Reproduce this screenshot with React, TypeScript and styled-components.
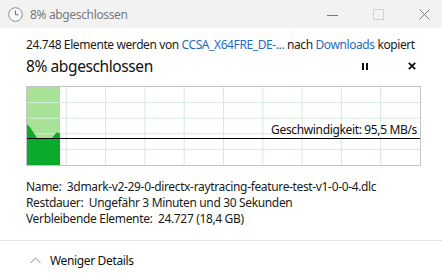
import React from 'react';
import styled, { createGlobalStyle } from 'styled-components';

const GlobalStyle = createGlobalStyle`
  html, body {
    margin: 0;
    padding: 0;
    background: #ffffff;
  }
  body {
    font-family: "Noto Sans", "Open Sans", sans-serif;
    font-size: 12px;
    letter-spacing: -0.35px;
    color: #1b1b1b;
  }
`;

const Window = styled.div`
  width: 442px;
  height: 279px;
  display: flex;
  flex-direction: column;
  background: #fff;
  overflow: hidden;
`;

const TitleBar = styled.div`
  height: 28px;
  flex-shrink: 0;
  background: #f2f2f2;
  display: flex;
  align-items: center;
  padding-left: 8px;
  box-sizing: border-box;
`;

const TitleText = styled.span`
  margin-left: 7px;
  color: #7a7a7a;
  font-size: 12px;
  flex: 1;
`;

const Captions = styled.div`
  display: flex;
  flex-shrink: 0;
  margin-right: -5px;
`;

const CaptionButton = styled.div`
  width: 46px;
  height: 28px;
  display: flex;
  align-items: center;
  justify-content: center;
`;

const Body = styled.div`
  padding: 9px 22px 0 26px;
  display: flex;
  flex-direction: column;
`;

const InfoLine = styled.div`
  line-height: 16px;
  white-space: nowrap;
  letter-spacing: -0.4px;
`;

const Link = styled.span`
  color: #1f6bc1;
`;

const HeadRow = styled.div`
  display: flex;
  align-items: center;
  height: 22px;
  margin-top: 2px;
`;

const Heading = styled.div`
  font-size: 15.5px;
  letter-spacing: -0.4px;
  flex: 1;
  color: #111;
`;

const IconButton = styled.div<{ $w: number; $gap?: number }>`
  width: ${p => p.$w}px;
  margin-right: ${p => p.$gap || 0}px;
  height: 14px;
  display: flex;
  align-items: center;
  justify-content: center;
`;

const Graph = styled.div`
  position: relative;
  margin-top: 9px;
  width: 393px;
  height: 78px;
  border: 1px solid #c4c4c4;
  svg { display: block; }
`;

const Speed = styled.div`
  position: absolute;
  right: 3px;
  top: 36px;
  font-size: 12px;
  line-height: 14px;
  color: #111;
`;

const Details = styled.div`
  margin-top: 13px;
  display: flex;
  flex-direction: column;
`;

const DetailLine = styled.div`
  line-height: 16px;
  white-space: pre;
`;

const Footer = styled.div`
  margin-top: auto;
  border-top: 1px solid #e4e4e4;
  height: 39px;
  display: flex;
  align-items: center;
  padding-left: 30px;
  box-sizing: border-box;
`;

const FooterLabel = styled.span`
  margin-left: 9px;
  font-size: 12px;
  color: #111;
`;

const W = 393;
const H = 78;

const GraphSvg = () => {
  const cols = Array.from({ length: 9 }, (_, i) => ((i + 1) * W) / 10);
  const rows = Array.from({ length: 4 }, (_, i) => ((i + 1) * H) / 5);
  return (
    <svg width={W} height={H}>
      <rect x={0} y={0} width={33} height={H} fill="#a8e296" />
      {cols.map(x => (
        <line key={'c' + x} x1={x} y1={0} x2={x} y2={H} stroke="#d6eadb" strokeWidth={1} />
      ))}
      {rows.map(y => (
        <line key={'r' + y} x1={0} y1={y} x2={W} y2={y} stroke="#d6eadb" strokeWidth={1} />
      ))}
      <path
        d="M0 37.5 L3 40 L10 51 L25 51 L29 46 L31 45.5 L33 46.5 L33 78 L0 78 Z"
        fill="#0aaa2c"
      />
      <line x1={0} y1={51.5} x2={W} y2={51.5} stroke="#000" strokeWidth={1.2} />
    </svg>
  );
};

export default function App() {
  return (
    <Window>
      <GlobalStyle />
      <TitleBar>
        <svg width="15" height="15" viewBox="0 0 15 15">
          <circle cx="7.5" cy="7.5" r="6.8" fill="#fafafa" stroke="#8c8c8c" strokeWidth="1" />
          <path d="M7.5 3.5 V7.8 H10.5" fill="none" stroke="#6e6e6e" strokeWidth="1" />
        </svg>
        <TitleText>8% abgeschlossen</TitleText>
        <Captions>
          <CaptionButton>
            <svg width="11" height="11" viewBox="0 0 11 11">
              <line x1="0" y1="6.5" x2="11" y2="6.5" stroke="#7a7a7a" strokeWidth="1" />
            </svg>
          </CaptionButton>
          <CaptionButton>
            <svg width="11" height="11" viewBox="0 0 11 11">
              <rect x="0.5" y="0.5" width="10" height="10" fill="none" stroke="#d2d2d2" strokeWidth="1" />
            </svg>
          </CaptionButton>
          <CaptionButton>
            <svg width="11" height="11" viewBox="0 0 11 11">
              <path d="M0.5 0.5 L10.5 10.5 M10.5 0.5 L0.5 10.5" stroke="#7a7a7a" strokeWidth="1" />
            </svg>
          </CaptionButton>
        </Captions>
      </TitleBar>
      <Body>
        <InfoLine>
          24.748 Elemente werden von <Link>CCSA_X64FRE_DE-...</Link> nach <Link>Downloads</Link> kopiert
        </InfoLine>
        <HeadRow>
          <Heading>8% abgeschlossen</Heading>
          <IconButton $w={10} $gap={34}>
            <svg width="6" height="7" viewBox="0 0 6 7">
              <rect x="0" y="0" width="2" height="7" fill="#111" />
              <rect x="4" y="0" width="2" height="7" fill="#111" />
            </svg>
          </IconButton>
          <IconButton $w={16}>
            <svg width="8" height="8" viewBox="0 0 8 8">
              <path d="M0.8 0.8 L7.2 7.2 M7.2 0.8 L0.8 7.2" stroke="#111" strokeWidth="1.8" />
            </svg>
          </IconButton>
        </HeadRow>
        <Graph>
          <GraphSvg />
          <Speed>Geschwindigkeit: 95,5 MB/s</Speed>
        </Graph>
        <Details>
          <DetailLine>Name:  3dmark-v2-29-0-directx-raytracing-feature-test-v1-0-0-4.dlc</DetailLine>
          <DetailLine>Restdauer:  Ungefähr 3 Minuten und 30 Sekunden</DetailLine>
          <DetailLine>Verbleibende Elemente:  24.727 (18,4 GB)</DetailLine>
        </Details>
      </Body>
      <Footer>
        <svg width="11" height="7" viewBox="0 0 11 7">
          <path d="M0.5 6 L5.5 1 L10.5 6" fill="none" stroke="#8a8a8a" strokeWidth="1" />
        </svg>
        <FooterLabel>Weniger Details</FooterLabel>
      </Footer>
    </Window>
  );
}
